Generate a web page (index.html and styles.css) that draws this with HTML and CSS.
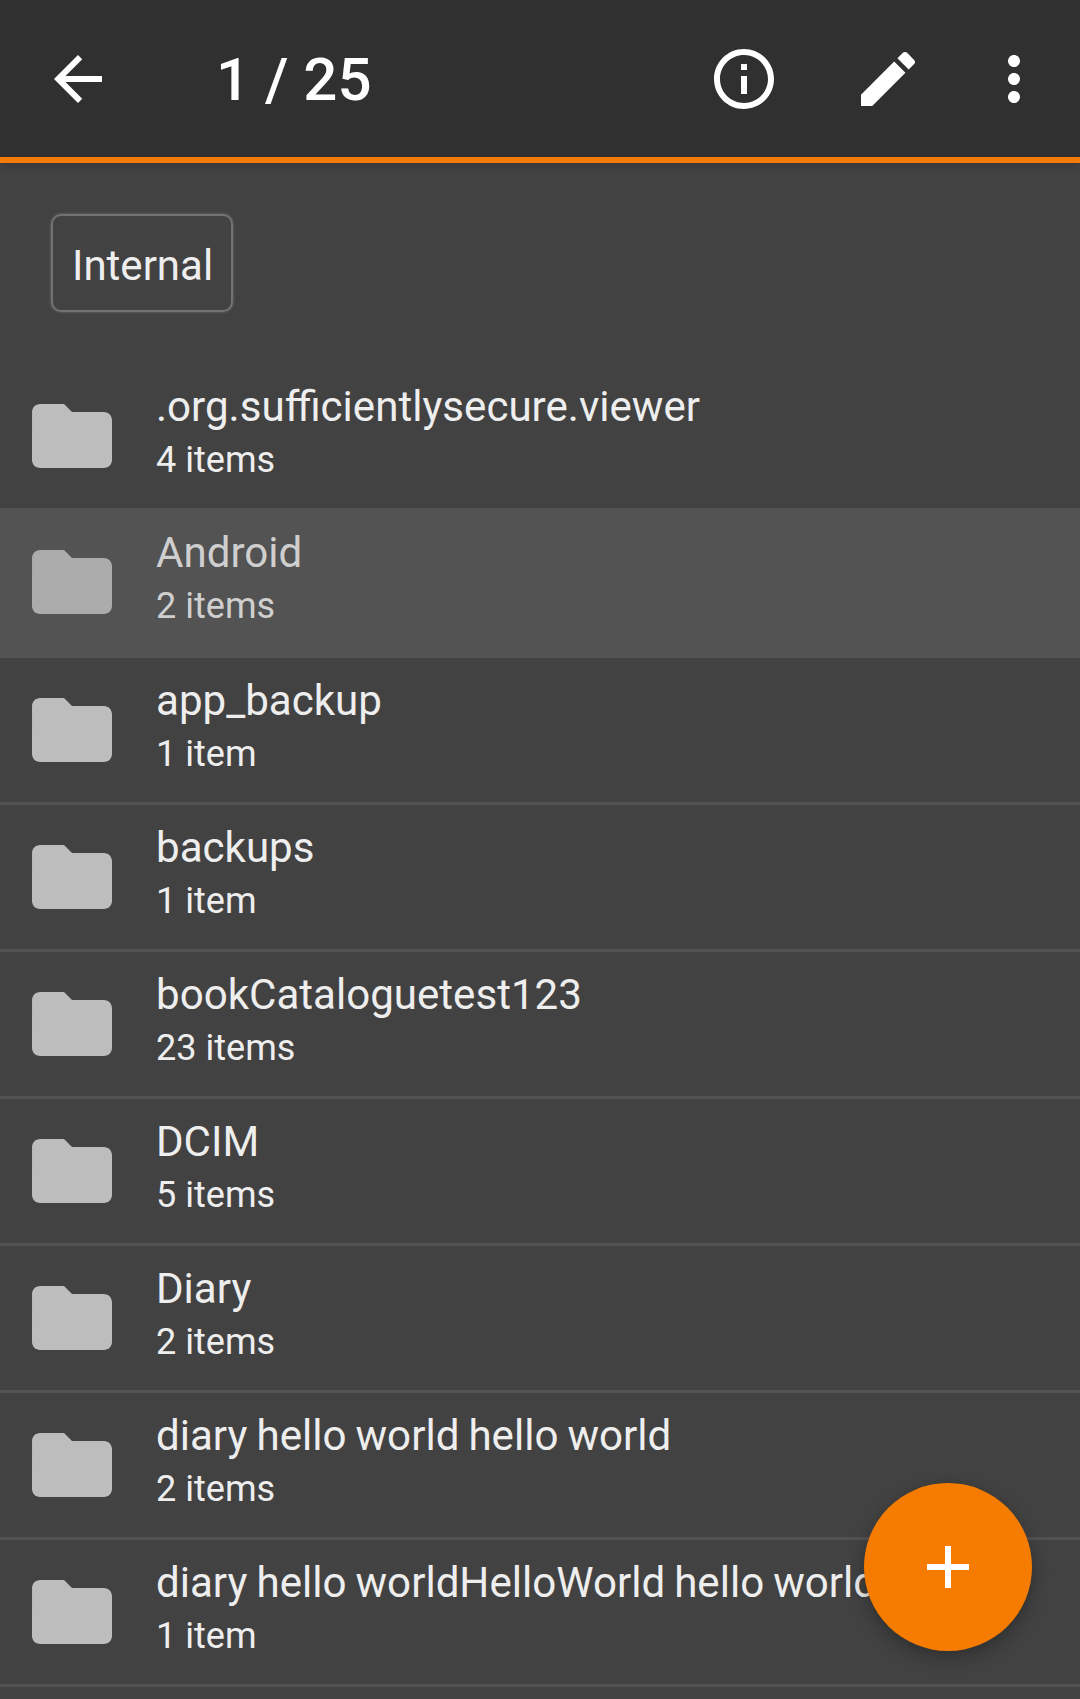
FILE: index.html
```html
<!DOCTYPE html>
<html>
<head>
  <meta charset="UTF-8">
  <title>Files</title>
  <link rel="stylesheet" href="styles.css">
</head>
<body>
  <div id="app">
    <div class="toolbar">
      <svg class="icon back-icon" viewBox="0 0 24 24"><path d="M20 11H7.83l5.59-5.59L12 4l-8 8 8 8 1.41-1.41L7.83 13H20v-2z"/></svg>
      <span class="toolbar-title">1 / 25</span>
      <svg class="icon info-icon" viewBox="0 0 24 24"><path d="M11 7h2v2h-2zm0 4h2v6h-2zm1-9C6.48 2 2 6.48 2 12s4.48 10 10 10 10-4.48 10-10S17.52 2 12 2zm0 18c-4.41 0-8-3.59-8-8s3.59-8 8-8 8 3.59 8 8-3.59 8-8 8z"/></svg>
      <svg class="icon edit-icon" viewBox="0 0 24 24"><path d="M3 17.25V21h3.75L17.81 9.94l-3.75-3.75L3 17.25zM20.71 7.04c.39-.39.39-1.02 0-1.41l-2.34-2.34c-.39-.39-1.02-.39-1.41 0l-1.83 1.83 3.75 3.75 1.83-1.83z"/></svg>
      <svg class="icon more-icon" viewBox="0 0 24 24"><path d="M12 8c1.1 0 2-.9 2-2s-.9-2-2-2-2 .9-2 2 .9 2 2 2zm0 2c-1.1 0-2 .9-2 2s.9 2 2 2 2-.9 2-2-.9-2-2-2zm0 6c-1.1 0-2 .9-2 2s.9 2 2 2 2-.9 2-2-.9-2-2-2z"/></svg>
    </div>

    <div class="crumbs">
      <span class="crumb">Internal</span>
    </div>

    <div class="file-list">
      <div class="file-row first">
        <svg class="folder-icon" viewBox="0 0 24 24"><path d="M10 4H4c-1.1 0-1.99.9-1.99 2L2 18c0 1.1.9 2 2 2h16c1.1 0 2-.9 2-2V8c0-1.1-.9-2-2-2h-8l-2-2z"/></svg>
        <div class="file-text">
          <div class="file-name">.org.sufficientlysecure.viewer</div>
          <div class="file-count">4 items</div>
        </div>
      </div>
      <div class="file-row pressed">
        <svg class="folder-icon" viewBox="0 0 24 24"><path d="M10 4H4c-1.1 0-1.99.9-1.99 2L2 18c0 1.1.9 2 2 2h16c1.1 0 2-.9 2-2V8c0-1.1-.9-2-2-2h-8l-2-2z"/></svg>
        <div class="file-text">
          <div class="file-name">Android</div>
          <div class="file-count">2 items</div>
        </div>
      </div>
      <div class="file-row">
        <svg class="folder-icon" viewBox="0 0 24 24"><path d="M10 4H4c-1.1 0-1.99.9-1.99 2L2 18c0 1.1.9 2 2 2h16c1.1 0 2-.9 2-2V8c0-1.1-.9-2-2-2h-8l-2-2z"/></svg>
        <div class="file-text">
          <div class="file-name">app_backup</div>
          <div class="file-count">1 item</div>
        </div>
      </div>
      <div class="file-row">
        <svg class="folder-icon" viewBox="0 0 24 24"><path d="M10 4H4c-1.1 0-1.99.9-1.99 2L2 18c0 1.1.9 2 2 2h16c1.1 0 2-.9 2-2V8c0-1.1-.9-2-2-2h-8l-2-2z"/></svg>
        <div class="file-text">
          <div class="file-name">backups</div>
          <div class="file-count">1 item</div>
        </div>
      </div>
      <div class="file-row">
        <svg class="folder-icon" viewBox="0 0 24 24"><path d="M10 4H4c-1.1 0-1.99.9-1.99 2L2 18c0 1.1.9 2 2 2h16c1.1 0 2-.9 2-2V8c0-1.1-.9-2-2-2h-8l-2-2z"/></svg>
        <div class="file-text">
          <div class="file-name">bookCataloguetest123</div>
          <div class="file-count">23 items</div>
        </div>
      </div>
      <div class="file-row">
        <svg class="folder-icon" viewBox="0 0 24 24"><path d="M10 4H4c-1.1 0-1.99.9-1.99 2L2 18c0 1.1.9 2 2 2h16c1.1 0 2-.9 2-2V8c0-1.1-.9-2-2-2h-8l-2-2z"/></svg>
        <div class="file-text">
          <div class="file-name">DCIM</div>
          <div class="file-count">5 items</div>
        </div>
      </div>
      <div class="file-row">
        <svg class="folder-icon" viewBox="0 0 24 24"><path d="M10 4H4c-1.1 0-1.99.9-1.99 2L2 18c0 1.1.9 2 2 2h16c1.1 0 2-.9 2-2V8c0-1.1-.9-2-2-2h-8l-2-2z"/></svg>
        <div class="file-text">
          <div class="file-name">Diary</div>
          <div class="file-count">2 items</div>
        </div>
      </div>
      <div class="file-row">
        <svg class="folder-icon" viewBox="0 0 24 24"><path d="M10 4H4c-1.1 0-1.99.9-1.99 2L2 18c0 1.1.9 2 2 2h16c1.1 0 2-.9 2-2V8c0-1.1-.9-2-2-2h-8l-2-2z"/></svg>
        <div class="file-text">
          <div class="file-name">diary hello world hello world</div>
          <div class="file-count">2 items</div>
        </div>
      </div>
      <div class="file-row">
        <svg class="folder-icon" viewBox="0 0 24 24"><path d="M10 4H4c-1.1 0-1.99.9-1.99 2L2 18c0 1.1.9 2 2 2h16c1.1 0 2-.9 2-2V8c0-1.1-.9-2-2-2h-8l-2-2z"/></svg>
        <div class="file-text">
          <div class="file-name">diary hello worldHelloWorld hello world</div>
          <div class="file-count">1 item</div>
        </div>
      </div>
    </div>

    <div class="fab">
      <svg class="fab-icon" viewBox="0 0 42 42"><path d="M18 0h6v18h18v6H24v18h-6V24H0v-6h18z"/></svg>
    </div>
  </div>
</body>
</html>
```

FILE: styles.css
```css
body {
  margin: 0;
  background: #424242;
  font-family: Roboto, sans-serif;
}
#app {
  position: relative;
  width: 1080px;
  height: 1699px;
  overflow: hidden;
  background: #424242;
}

/* Toolbar */
.toolbar {
  position: relative;
  display: flex;
  align-items: center;
  box-sizing: border-box;
  height: 163px;
  padding: 0 30px 0 42px;
  background: #303030;
  border-bottom: 6px solid #f57c00;
  box-shadow: 0 2px 8px rgba(0, 0, 0, 0.2);
}
.icon {
  flex: none;
  width: 72px;
  height: 72px;
  fill: #ffffff;
}
.toolbar-title {
  margin-left: 102px;
  padding-top: 2px;
  font-size: 60px;
  font-weight: 500;
  color: #ffffff;
}
.info-icon {
  margin-left: auto;
}
.edit-icon {
  margin-left: 72px;
}
.more-icon {
  margin-left: 54px;
}

/* Breadcrumb */
.crumbs {
  display: flex;
  padding: 51px 0 52px 51px;
}
.crumb {
  box-sizing: border-box;
  height: 98px;
  line-height: 99px;
  padding: 0 18px 0 19px;
  border: 2px solid #727272;
  border-radius: 10px;
  box-shadow: 0 0 3px #727272;
  font-size: 42px;
  color: #eeeeee;
}

/* Folder list */
.file-row {
  display: flex;
  align-items: center;
  box-sizing: border-box;
  height: 147px;
  padding-left: 24px;
  border-bottom: 3px solid #535353;
}
.file-row.first {
  height: 144px;
  border-bottom: none;
}
.file-row.pressed {
  height: 150px;
  background: #535353;
}
.file-row.pressed .file-name,
.file-row.pressed .file-count {
  color: #cfcfcf;
}
.file-row.pressed .folder-icon {
  fill: #acacac;
}
.folder-icon {
  flex: none;
  width: 96px;
  height: 96px;
  fill: #bdbdbd;
}
.file-text {
  margin-left: 36px;
  padding-bottom: 10px;
  white-space: nowrap;
}
.file-name {
  font-size: 42.1px;
  line-height: 58px;
  word-spacing: -1.4px;
  color: #eeeeee;
}
.file-count {
  font-size: 36.1px;
  line-height: 48px;
  color: #eeeeee;
}

/* Add button */
.fab {
  position: absolute;
  left: 864px;
  top: 1483px;
  display: flex;
  align-items: center;
  justify-content: center;
  width: 168px;
  height: 168px;
  border-radius: 50%;
  background: #f57c00;
  box-shadow: 0 6px 18px rgba(0, 0, 0, 0.3);
}
.fab-icon {
  width: 42px;
  height: 42px;
  fill: #ffffff;
}
```
